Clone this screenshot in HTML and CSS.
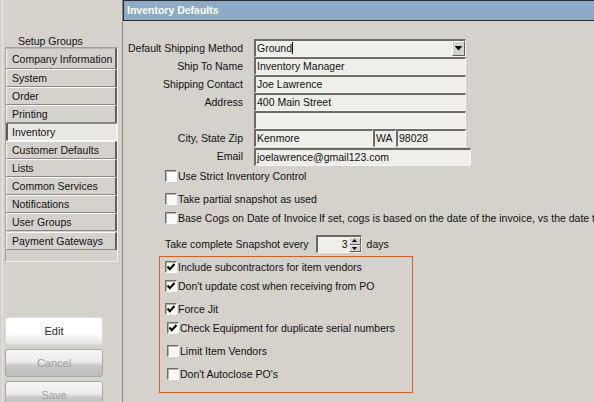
FILE: index.html
```html
<!DOCTYPE html>
<html lang="en">
<head>
    <meta charset="UTF-8">
    <title>Inventory Defaults</title>
    <link rel="stylesheet" href="styles.css">
</head>
<body>
    <div class="app">
        <!-- setup groups -->
        <div class="sidebar">
            <div class="group-title">Setup Groups</div>
            <div class="nav">
                <div class="nav-item first">Company Information</div>
                <div class="nav-item">System</div>
                <div class="nav-item">Order</div>
                <div class="nav-item">Printing</div>
                <div class="nav-item active">Inventory</div>
                <div class="nav-item">Customer Defaults</div>
                <div class="nav-item">Lists</div>
                <div class="nav-item">Common Services</div>
                <div class="nav-item">Notifications</div>
                <div class="nav-item">User Groups</div>
                <div class="nav-item last">Payment Gateways</div>
            </div>
            <div class="actions">
                <div class="btn">Edit</div>
                <div class="btn disabled">Cancel</div>
                <div class="btn disabled">Save</div>
            </div>
        </div>

        <!-- inventory defaults -->
        <div class="main">
            <div class="header">Inventory Defaults</div>

            <div class="form">
                <div class="label">Default Shipping Method</div>
                <div class="field select">Ground<span class="caret"></span>
                    <span class="drop-btn">
                        <svg width="7" height="5" viewBox="0 0 7 5"><rect x="0" y="0" width="7" height="1" fill="#000"/><polygon points="0.5,1 6.5,1 3.5,4.5" fill="#000"/></svg>
                    </span>
                </div>

                <div class="label">Ship To Name</div>
                <div class="field">Inventory Manager</div>

                <div class="label">Shipping Contact</div>
                <div class="field">Joe Lawrence</div>

                <div class="label">Address</div>
                <div class="field">400 Main Street</div>

                <div class="label"></div>
                <div class="field"></div>

                <div class="label">City, State Zip</div>
                <div class="field-row">
                    <div class="field city">Kenmore</div>
                    <div class="field state">WA</div>
                    <div class="field zip">98028</div>
                </div>

                <div class="label">Email</div>
                <div class="field email">joelawrence@gmail123.com</div>
            </div>

            <div class="options">
                <div class="opt first">
                    <span class="check"></span>Use Strict Inventory Control
                </div>
                <div class="opt loose">
                    <span class="check"></span>Take partial snapshot as used
                </div>
                <div class="opt">
                    <span class="check"></span>Base Cogs on Date of Invoice <span class="note">If set, cogs is based on the date of the invoice, vs the date the item was received</span>
                </div>
                <div class="opt snapshot">
                    Take complete Snapshot every
                    <div class="spinner">
                        <span class="spin-value">3</span>
                        <span class="spin-btns">
                            <span class="spin-btn"><svg width="5" height="3" viewBox="0 0 5 3"><polygon points="2.5,0 5,3 0,3" fill="#000"/></svg></span>
                            <span class="spin-btn"><svg width="5" height="3" viewBox="0 0 5 3"><polygon points="0,0 5,0 2.5,3" fill="#000"/></svg></span>
                        </span>
                    </div>
                    <span class="days">days</span>
                </div>

                <div class="highlight">
                    <div class="opt top">
                        <span class="check on"><svg width="10" height="10" viewBox="0 0 10 10"><polyline points="1.5,4.5 3.8,7.2 8.5,2" fill="none" stroke="#000" stroke-width="2"/></svg></span>Include subcontractors for item vendors
                    </div>
                    <div class="opt">
                        <span class="check on"><svg width="10" height="10" viewBox="0 0 10 10"><polyline points="1.5,4.5 3.8,7.2 8.5,2" fill="none" stroke="#000" stroke-width="2"/></svg></span>Don't update cost when receiving from PO
                    </div>
                    <div class="opt loose">
                        <span class="check on"><svg width="10" height="10" viewBox="0 0 10 10"><polyline points="1.5,4.5 3.8,7.2 8.5,2" fill="none" stroke="#000" stroke-width="2"/></svg></span>Force Jit
                    </div>
                    <div class="opt shift">
                        <span class="check on"><svg width="10" height="10" viewBox="0 0 10 10"><polyline points="1.5,4.5 3.8,7.2 8.5,2" fill="none" stroke="#000" stroke-width="2"/></svg></span>Check Equipment for duplicate serial numbers
                    </div>
                    <div class="opt loose shift">
                        <span class="check"></span>Limit Item Vendors
                    </div>
                    <div class="opt loose shift">
                        <span class="check"></span>Don't Autoclose PO's
                    </div>
                </div>
            </div>
        </div>
    </div>
</body>
</html>
```

FILE: styles.css
```css
* {
    margin: 0;
    padding: 0;
    box-sizing: border-box;
}

body {
    font-family: "Liberation Sans", Arial, sans-serif;
    font-size: 10.5px;
    color: #111;
    background: #d5d2cb;
    width: 594px;
    height: 402px;
    overflow: hidden;
}

.app {
    display: flex;
    height: 402px;
}

/* sidebar */
.sidebar {
    width: 123px;
    flex-shrink: 0;
    border-right: 1px solid #8c8a85;
    box-shadow: inset 2px 0 0 #d5d2cb, inset 3px 0 0 #e8e6e1;
    padding-top: 35px;
}

.group-title {
    line-height: 12px;
    padding-left: 18px;
}

.nav {
    margin-left: 5px;
    width: 113px;
    height: 215px;
    border: 1px solid #a3a09a;
    border-right-color: #f4f3ef;
    border-bottom-color: #f4f3ef;
}

.nav-item {
    height: 18px;
    line-height: 16px;
    padding-left: 5px;
    border-top: 1px solid #fbfbf9;
    border-left: 1px solid #fbfbf9;
    border-right: 2px solid #5f5e5b;
    border-bottom: 1px solid #8a8884;
    white-space: nowrap;
    overflow: hidden;
}

.nav-item.first {
    height: 21px;
    line-height: 20px;
    border-top-color: #b9b7b1;
}

.nav-item.last {
    margin-top: 1px;
}

.nav-item.active {
    background-color: #e9e7e1;
    background-image: radial-gradient(#d7d5cf 0.6px, transparent 0.7px);
    background-size: 2px 2px;
    border-top: 1px solid #8a8884;
    border-left: 2px solid #5f5e5b;
    border-right: 1px solid #fbfbf9;
    border-bottom: 1px solid #fbfbf9;
    padding-left: 4px;
}

.actions {
    margin: 55px 0 0 5px;
    display: flex;
    flex-direction: column;
    gap: 4px;
}

.btn {
    width: 98px;
    height: 28px;
    line-height: 26px;
    text-align: center;
    font-size: 11px;
    color: #2a2a2a;
    border: 1px solid #dcdcdc;
    border-radius: 3px;
    background: linear-gradient(#ffffff 0%, #ffffff 55%, #f0f0f0 80%, #e2e2e2 100%);
}

.btn.disabled {
    color: #a2a2a2;
    border-color: #a9a9a9;
    background: linear-gradient(#f6f6f6 0%, #ececec 45%, #c8c8c8 60%, #bcbcbc 100%);
}

/* main pane */
.main {
    flex: 1;
    overflow: hidden;
    white-space: nowrap;
}

.header {
    height: 21px;
    line-height: 19px;
    background: #8cabc7;
    border-top: 1px solid #2b2b2b;
    border-bottom: 1px solid #2b2b2b;
    border-left: 1px solid #2b2b2b;
    color: #fff;
    font-weight: bold;
    padding-left: 3px;
}

.form {
    margin: 18px 0 0 5px;
    display: grid;
    grid-template-columns: 115px 212px;
    grid-auto-rows: 18px;
    column-gap: 11px;
}

.label {
    text-align: right;
    line-height: 18px;
}

.field {
    height: 18px;
    line-height: 15px;
    background: #efeee8;
    border-top: 2px solid #6c6b68;
    border-left: 2px solid #6c6b68;
    border-right: 1px solid #f7f6f2;
    border-bottom: 1px solid #f7f6f2;
    padding-left: 1px;
    overflow: hidden;
}

.select {
    position: relative;
}

.caret {
    display: inline-block;
    width: 1px;
    height: 12px;
    background: #000;
    vertical-align: -2px;
}

.drop-btn {
    position: absolute;
    right: 0;
    top: 0;
    width: 13px;
    height: 15px;
    background: #d5d2cb;
    border-top: 1px solid #fff;
    border-left: 1px solid #fff;
    border-right: 1px solid #5f5e5b;
    border-bottom: 1px solid #5f5e5b;
    display: flex;
    align-items: center;
    justify-content: center;
}

.field-row {
    display: flex;
}

.city {
    width: 119px;
}

.state {
    width: 23px;
}

.zip {
    width: 70px;
}

.email {
    width: 217px;
    margin-top: 1px;
}

/* checkbox options */
.options {
    margin-left: 42px;
}

.opt {
    display: flex;
    align-items: center;
    height: 14px;
    margin-top: 5px;
}

.opt.first {
    margin-top: 4px;
}

.opt.top {
    margin-top: 1px;
}

.opt.loose {
    margin-top: 9px;
}

.opt.shift {
    padding-left: 2px;
}

.check {
    width: 12px;
    height: 12px;
    margin-right: 1px;
    flex-shrink: 0;
    background: #f9f9f7;
    border-top: 1px solid #6f6e6b;
    border-left: 1px solid #6f6e6b;
    border-right: 1px solid #ffffff;
    border-bottom: 1px solid #ffffff;
    box-shadow: inset 1px 1px 0 #b4b2ac;
    display: flex;
    align-items: center;
    justify-content: center;
}

.note {
    margin-left: 2px;
}

.snapshot {
    height: 18px;
    margin-top: 10px;
}

.spinner {
    margin-left: 7px;
    width: 46px;
    height: 18px;
    display: flex;
    background: #efeee8;
    border-top: 2px solid #6c6b68;
    border-left: 2px solid #6c6b68;
    border-right: 1px solid #f7f6f2;
    border-bottom: 1px solid #f7f6f2;
}

.spin-value {
    flex: 1;
    text-align: right;
    line-height: 15px;
    padding-right: 1px;
}

.spin-btns {
    width: 12px;
    display: flex;
    flex-direction: column;
}

.spin-btn {
    flex: 1;
    background: #d5d2cb;
    border-top: 1px solid #fff;
    border-left: 1px solid #fff;
    border-right: 1px solid #5f5e5b;
    border-bottom: 1px solid #5f5e5b;
    display: flex;
    align-items: center;
    justify-content: center;
}

.days {
    margin-left: 5px;
}

.highlight {
    margin: 3px 0 0 -6px;
    width: 254px;
    height: 137px;
    border: 1px solid #d3612b;
    padding: 2px 0 0 5px;
}
```
